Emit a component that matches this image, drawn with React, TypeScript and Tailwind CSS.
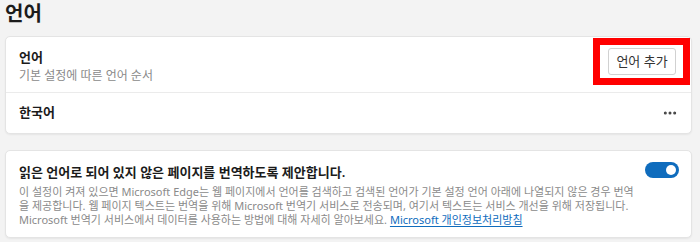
import { MoreHorizontal } from 'lucide-react';

export default function App() {
  return (
    <div
      className="h-[242px] w-[700px] overflow-hidden bg-[#f3f3f3] text-[#1b1b1b]"
      style={{ fontFamily: '"Segoe UI", "Noto Sans", "Noto Sans CJK KR", sans-serif' }}
    >
      <h1 className="pl-[5px] pt-[1px] text-[20px] font-semibold leading-[26px]">언어</h1>

      {/* Language list card */}
      <div className="ml-[5px] mt-[9px] w-[687px] rounded-[5px] border border-[#e4e4e4] bg-white shadow-[0_1px_2px_rgba(0,0,0,0.06)]">
        <div className="flex h-[56px] items-center justify-between border-b border-[#ebebeb] pl-[13px] pr-[13px]">
          <div className="pt-[3px]">
            <div className="text-[13px] font-semibold leading-[18px]">언어</div>
            <div className="mt-[2px] text-[12px] leading-[16px] text-[#8a8a8a]">기본 설정에 따른 언어 순서</div>
          </div>
          <div className="-mr-[12px] -mt-[6px] border-[7px] border-[#ff0000] bg-white p-[3px_7px_3px_8px]">
            <button className="h-[27px] w-[68px] rounded-[3px] border border-[#d1d1d1] bg-white text-[13px] text-[#333]">
              언어 추가
            </button>
          </div>
        </div>
        <div className="flex h-[40px] items-center justify-between pl-[13px] pr-[13px]">
          <span className="text-[13px] font-semibold">한국어</span>
          <MoreHorizontal className="h-[16px] w-[16px] text-[#444]" strokeWidth={2.5} />
        </div>
      </div>

      {/* Translate offer card */}
      <div className="ml-[5px] mt-[16px] w-[687px] rounded-[5px] border border-[#e4e4e4] bg-white pb-[10px] pl-[13px] pr-[13px] pt-[10px] shadow-[0_1px_2px_rgba(0,0,0,0.06)]">
        <div className="flex items-start justify-between">
          <div>
            <div className="pt-[1px] text-[13px] font-semibold leading-[20px]">
              읽은 언어로 되어 있지 않은 페이지를 번역하도록 제안합니다.
            </div>
            <div className="mt-[3px] whitespace-nowrap text-[11px] leading-[14px] text-[#8a8a8a]">
              <div>이 설정이 켜져 있으면 Microsoft Edge는 웹 페이지에서 언어를 검색하고 검색된 언어가 기본 설정 언어 아래에 나열되지 않은 경우 번역</div>
              <div>을 제공합니다. 웹 페이지 텍스트는 번역을 위해 Microsoft 번역기 서비스로 전송되며, 여기서 텍스트는 서비스 개선을 위해 저장됩니다.</div>
              <div>
                Microsoft 번역기 서비스에서 데이터를 사용하는 방법에 대해 자세히 알아보세요.{' '}
                <a className="text-[#0f6cbd] underline underline-offset-2">Microsoft 개인정보처리방침</a>
              </div>
            </div>
          </div>
          <div className="mr-[-1px] mt-[1px] flex h-[16px] w-[34px] items-center justify-end rounded-full bg-[#0f6cbd] pr-[3px]">
            <div className="h-[10px] w-[10px] rounded-full bg-white" />
          </div>
        </div>
      </div>
    </div>
  );
}
